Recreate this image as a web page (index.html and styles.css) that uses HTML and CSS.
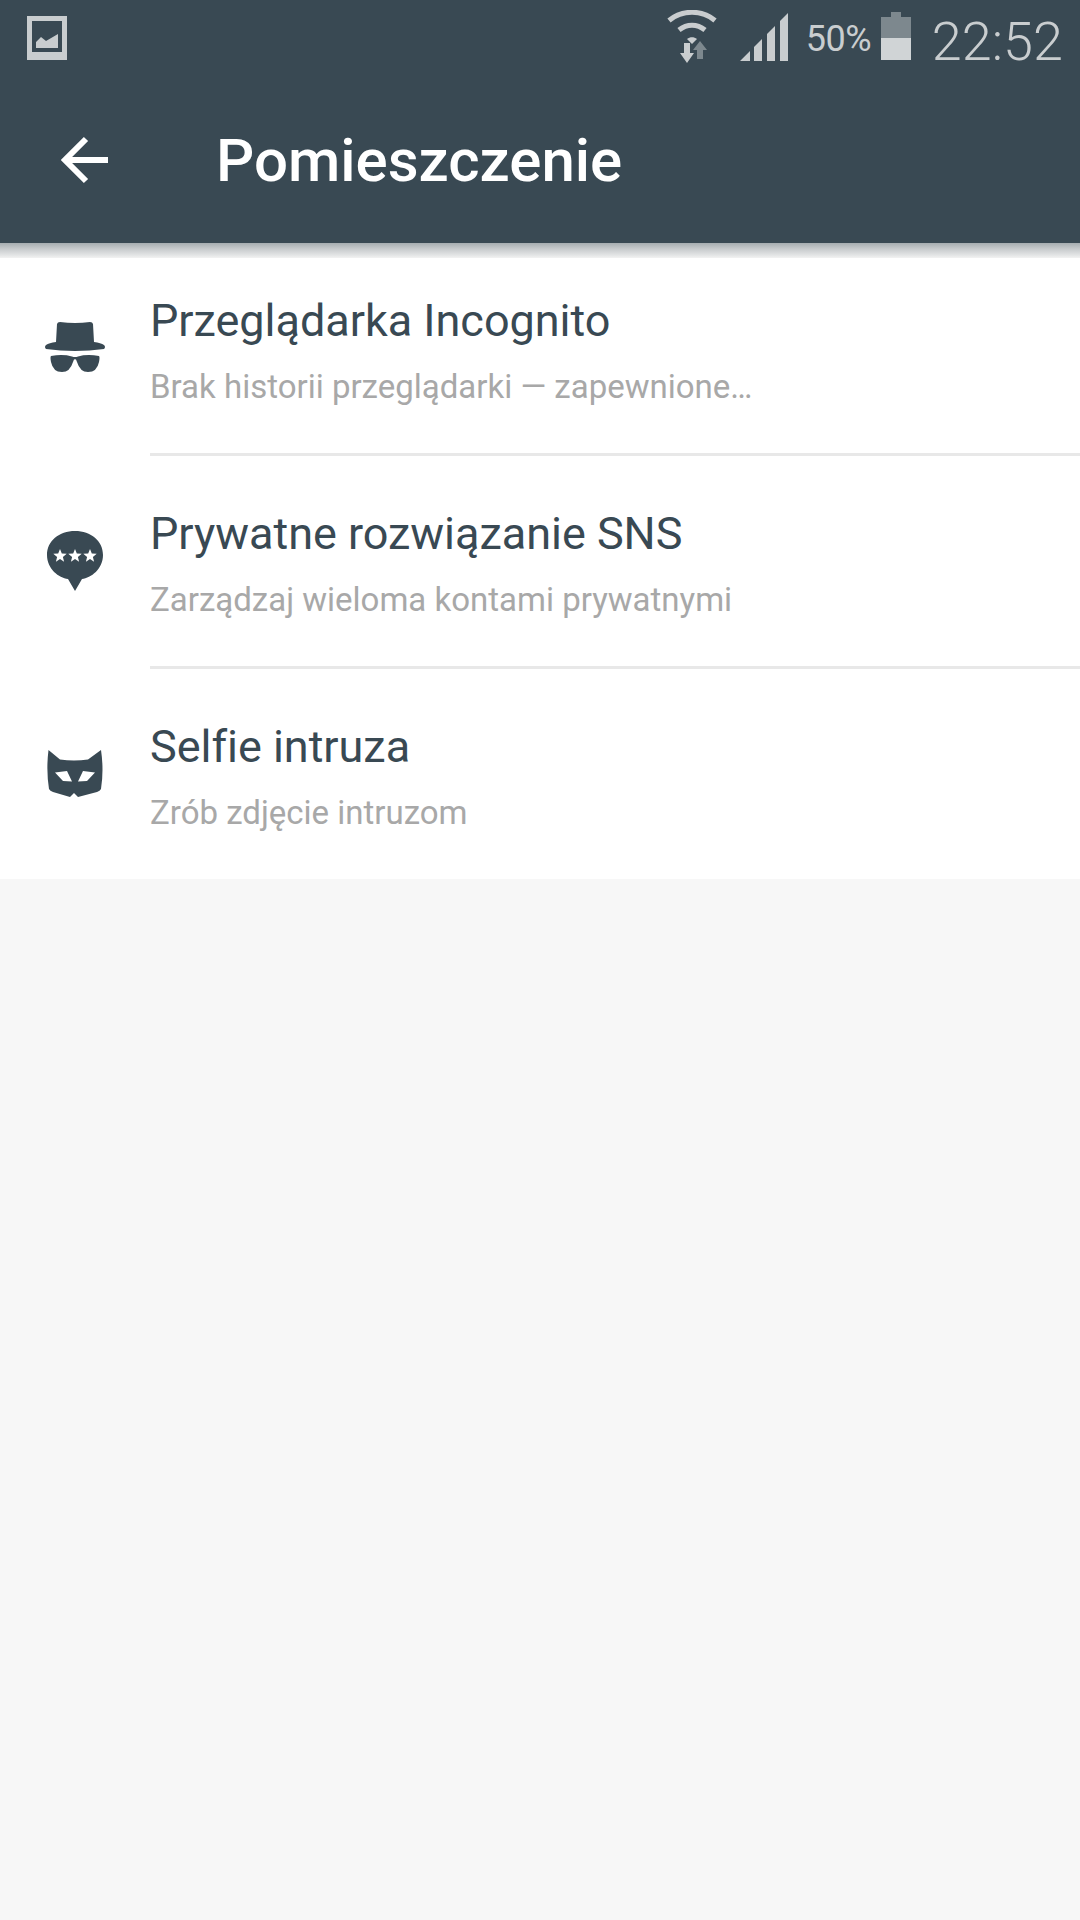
FILE: index.html
```html
<!DOCTYPE html>
<html lang="pl">
<head>
<meta charset="utf-8">
<title>Pomieszczenie</title>
<link rel="stylesheet" href="styles.css">
</head>
<body>
<header class="header">
  <div class="status">
    <svg class="st-image" width="40" height="44" viewBox="0 0 40 44"><path fill="#c9cdcf" fill-rule="evenodd" d="M0 0H40V44H0ZM5 5V36H35V5Z"/><path fill="#c9cdcf" d="M9 32V26L14 21L19 25L31 18V32Z"/></svg>
    <div class="st-right">
      <svg class="st-wifi" width="50" height="54" viewBox="0 0 50 54"><g fill="none" stroke="#c9cdcf" stroke-width="5"><path d="M2 10.500C15 -0.500 35 -0.500 48 10.500"/><path d="M12 20C20 13.500 30 13.500 38 20"/></g><path fill="#c9cdcf" d="M20 29C23 26.500 27 26.500 30 29L25 34Z"/><path fill="#7d888e" d="M30 49V40H26L33 31L40 40H36V49Z"/><path fill="#c9cdcf" d="M17 33H23V43H27L20 53L13 43H17Z"/></svg>
      <svg class="st-signal" width="48" height="48" viewBox="0 0 48 48"><path fill="#c9cdcf" d="M0 48L10 38V48ZM14 34L22 26V48H14ZM27 21L35 13V48H27ZM40 8L48 0V48H40Z"/></svg>
      <span class="st-pct">50%</span>
      <svg class="st-batt" width="30" height="48" viewBox="0 0 30 48"><path fill="#7d888e" d="M10 0H20V5H30V26H0V5H10Z"/><rect y="26" width="30" height="22" fill="#d0d4d6"/></svg>
      <span class="st-time">22:52</span>
    </div>
  </div>
  <div class="toolbar">
    <svg class="back" width="48" height="48" viewBox="0 0 48 48"><path fill="none" stroke="#fff" stroke-width="6" d="M48 24H5M26 3L5 24L26 45"/></svg>
    <h1 class="title">Pomieszczenie</h1>
  </div>
</header>
<div class="shadow"></div>
<ul class="list">
  <li class="row">
    <div class="icon icon-hat"><svg width="60" height="50" viewBox="0 0 60 50"><path fill="#394953" d="M12 2Q12.500 0 15 0Q30 2 45 0Q47.500 0 48 2L49 20Q56 21 59 23Q61 25 59 27Q30 31 1 27Q-1 25 1 23Q4 21 11 20Z"/><path fill="#394953" d="M6 34Q18 32 27 34.500Q30 35.500 33 34.500Q42 32 54 34Q55 35 54 40Q52 50 43 50Q35 50 32 40L31 37.500Q30 37 29 37.500L28 40Q25 50 17 50Q8 50 6 40Q5 35 6 34Z"/></svg></div>
    <div class="text"><div class="name">Przeglądarka Incognito</div><div class="desc">Brak historii przeglądarki — zapewnione…</div></div>
  </li>
  <li class="row">
    <div class="icon icon-bubble"><svg width="56" height="60" viewBox="0 0 56 60"><defs><path id="star" d="M0-7 1.800-2.400 6.700-2.200 2.900.9 4.100 5.700 0 3-4.100 5.700-2.900.9-6.700-2.200-1.800-2.400Z"/></defs><path fill="#394953" d="M28 0C44 0 56 10 56 24C56 38 44 47 35 48L28 60L21 48C12 47 0 38 0 24C0 10 12 0 28 0Z"/><g fill="#fff"><use href="#star" x="13" y="25"/><use href="#star" x="28" y="25"/><use href="#star" x="43" y="25"/></g></svg></div>
    <div class="text"><div class="name">Prywatne rozwiązanie SNS</div><div class="desc">Zarządzaj wieloma kontami prywatnymi</div></div>
  </li>
  <li class="row row-last">
    <div class="icon"><svg width="56" height="48" viewBox="0 0 56 48"><path fill="#394953" fill-rule="evenodd" d="M1.500 0L13 9.500Q27 11.500 41 9.500L54 0Q57 20 54 39Q53 41 50 42L31 47L27 43L23 47L6 42Q3 41 2 39Q-1 20 1.500 0ZM8 22.500L20 21L25 31.500L16 31ZM48 22.500L36 21L31 31.500L40 31Z"/></svg></div>
    <div class="text"><div class="name">Selfie intruza</div><div class="desc">Zrób zdjęcie intruzom</div></div>
  </li>
</ul>
</body>
</html>
```
FILE: styles.css
```css
* { box-sizing: border-box; }
html, body { margin: 0; padding: 0; }
body {
  width: 1080px;
  height: 1920px;
  overflow: hidden;
  background: #f7f7f7;
  font-family: Roboto, "Noto Sans", sans-serif;
  position: relative;
}
.header { height: 243px; background: #394953; display: flex; flex-direction: column; }
.status { height: 81px; display: flex; justify-content: space-between; align-items: flex-start; padding: 16px 17px 0 27px; }
.st-right { display: flex; align-items: flex-start; margin-top: -6px; }
.st-signal { margin: 3px 0 0 23px; }
.st-pct { margin: 8px 0 0 18px; font-size: 36px; font-weight: 400; line-height: 42px; color: #c9cdcf; width: 64px; white-space: nowrap; letter-spacing: -0.5px; }
.st-batt { margin: 2px 0 0 11px; }
.st-time { margin: 0 0 0 21px; font-size: 54px; font-weight: 300; line-height: 64px; color: #c9cdcf; white-space: nowrap; }
.toolbar { display: flex; align-items: center; height: 162px; padding: 0 0 0 60px; margin-top: -2px; }
.back { flex: none; }
.title { margin: 0 0 0 108px; font-size: 60px; font-weight: 500; color: #fff; white-space: nowrap; }
.shadow { position: absolute; left: 0; top: 243px; width: 1080px; height: 15px; background: linear-gradient(#a6adb0, #c8cbcd 40%, #dfe1e2 75%, #f2f2f2); }
.list { list-style: none; margin: 0; padding: 0; background: #fff; }
.row { height: 213px; display: flex; align-items: center; }
.row-last { height: 210px; }
.icon { width: 150px; flex: none; display: flex; justify-content: center; }
.icon-hat { padding-bottom: 5px; }
.icon-bubble { padding-bottom: 3px; }
.text { flex: 1; height: 100%; border-bottom: 3px solid #e8e8e8; padding-top: 48px; }
.row-last .text { border-bottom: 0; }
.name { font-size: 45px; line-height: 60px; color: #394953; white-space: nowrap; letter-spacing: -0.03px; }
.desc { margin-top: 16px; font-size: 33px; line-height: 40px; color: #a8a8a8; white-space: nowrap; }
```
